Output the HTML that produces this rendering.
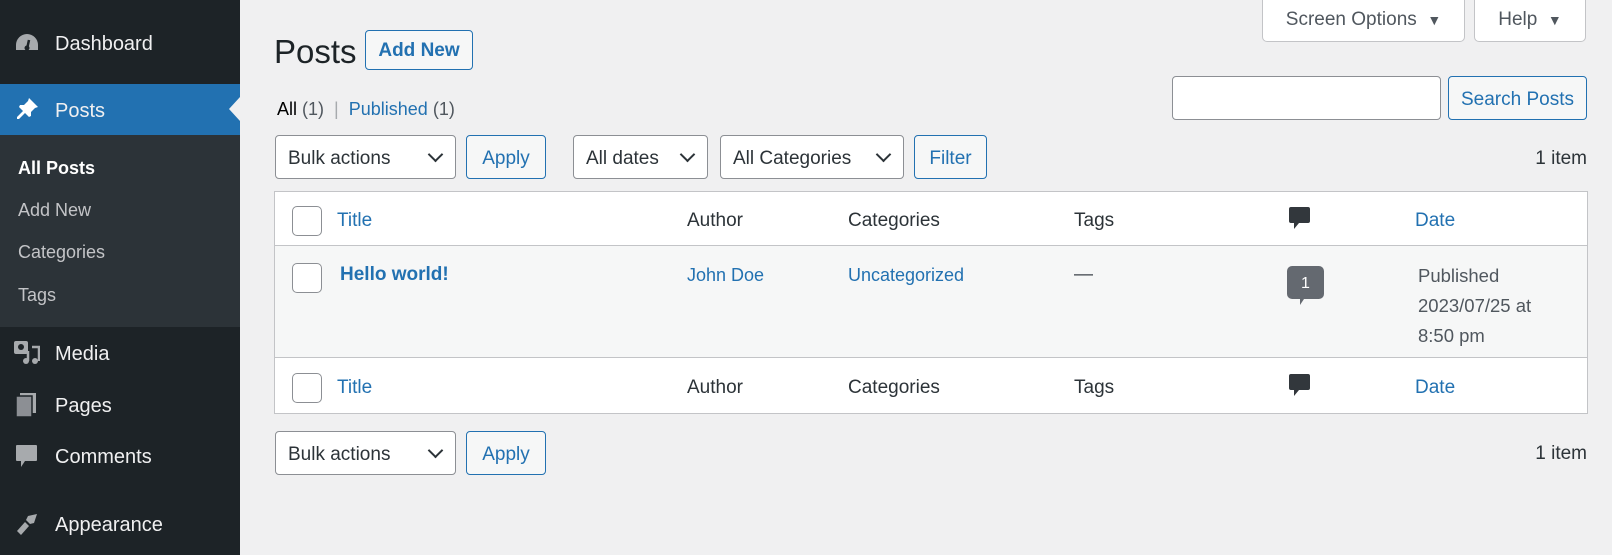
<!DOCTYPE html>
<html><head><meta charset="utf-8"><style>
*{box-sizing:border-box;margin:0;padding:0}
body{width:1612px;height:555px;background:#f0f0f1;font-family:"Liberation Sans",sans-serif;color:#3c434a;position:relative;overflow:hidden;font-size:19px}
.a{position:absolute;white-space:nowrap}
#side{position:absolute;left:0;top:0;width:240px;height:555px;background:#1d2327}
.mi{position:absolute;left:55px;color:#f0f0f1;font-size:20px;line-height:24px}
.ic{position:absolute;left:14px;width:26px;height:24px}
.sub{position:absolute;left:18px;color:#c3c4c7;font-size:18px;line-height:22px}
.btn{position:absolute;border:1px solid #2271b1;color:#2271b1;background:#f6f7f7;border-radius:4px;text-align:center;font-size:19px}
.sel{position:absolute;border:1px solid #8c8f94;background:#fff;border-radius:4px;font-size:19px;color:#2c3338;padding-left:12px}
.chev{position:absolute;right:14px;top:13px;width:11px;height:11px;border-right:2.5px solid #2c3338;border-bottom:2.5px solid #2c3338;transform:rotate(45deg)}
.cb{position:absolute;left:292px;width:30px;height:30px;border:1px solid #8c8f94;border-radius:5px;background:#fff}
.lk{color:#2271b1}
.th{position:absolute;font-size:19px;line-height:24px}
</style></head><body>
<div id="side">
 <div style="position:absolute;top:84px;left:0;width:240px;height:51px;background:#2271b1"></div>
 <div style="position:absolute;top:97px;left:229px;width:0;height:0;border-top:12px solid transparent;border-bottom:12px solid transparent;border-right:11px solid #f0f0f1"></div>
 <div style="position:absolute;top:135px;left:0;width:240px;height:192px;background:#2c3338"></div>
 <svg class="ic" style="top:31px" viewBox="0 0 26 24"><path d="M13 3A11 11 0 0 0 2 14v5h22v-5A11 11 0 0 0 13 3z" fill="#a7aaad"/><path d="M13 18l2-9" stroke="#1d2327" stroke-width="2.5"/><circle cx="13" cy="17" r="2.5" fill="#1d2327"/></svg>
 <div class="mi" style="top:32px">Dashboard</div>
 <svg class="ic" style="top:96px" viewBox="0 0 26 24"><path d="M15 2l9 9-3 1-4 4 0 4-2 1-4-4-6 6-2 0 0-2 6-6-4-4 1-2 4 0 4-4z" fill="#fff"/></svg>
 <div class="mi" style="top:99px">Posts</div>
 <div class="sub" style="top:157px;color:#fff;font-weight:bold">All Posts</div>
 <div class="sub" style="top:199px">Add New</div>
 <div class="sub" style="top:241px">Categories</div>
 <div class="sub" style="top:284px">Tags</div>
 <svg class="ic" style="top:341px" viewBox="0 0 26 24"><rect x="0" y="0" width="14" height="13" rx="2" fill="#a7aaad"/><circle cx="7" cy="6" r="3" fill="#1d2327"/><path d="M18 6h7v14" stroke="#a7aaad" stroke-width="2.5" fill="none"/><circle cx="21" cy="20" r="3" fill="#a7aaad"/><circle cx="12" cy="20" r="3" fill="#a7aaad"/><path d="M14 20V10" stroke="#a7aaad" stroke-width="2.5"/></svg>
 <div class="mi" style="top:342px">Media</div>
 <svg class="ic" style="top:393px" viewBox="0 0 26 24"><rect x="6" y="0" width="16" height="20" fill="#a7aaad"/><rect x="2" y="3" width="16" height="21" fill="#8c8f94" stroke="#1d2327" stroke-width="1.5"/></svg>
 <div class="mi" style="top:394px">Pages</div>
 <svg class="ic" style="top:444px" viewBox="0 0 26 24"><path d="M3 1h19a1 1 0 0 1 1 1v14a1 1 0 0 1-1 1H11l-4 6v-6H3a1 1 0 0 1-1-1V2a1 1 0 0 1 1-1z" fill="#a7aaad"/></svg>
 <div class="mi" style="top:445px">Comments</div>
 <svg class="ic" style="top:512px" viewBox="0 0 26 24"><path d="M14 4l9-2-3 9-4 1-4-4z" fill="#a7aaad"/><path d="M11 10l4 4-8 9-4-4z" fill="#a7aaad"/></svg>
 <div class="mi" style="top:513px">Appearance</div>
</div>

<div class="a" style="left:1262px;top:-1px;width:203px;height:43px;background:#fff;border:1px solid #c3c4c7;border-top:none;border-radius:0 0 5px 5px;text-align:center;line-height:42px;font-size:19px;color:#50575e">Screen Options &nbsp;<span style="font-size:14px">▼</span></div>
<div class="a" style="left:1474px;top:-1px;width:112px;height:43px;background:#fff;border:1px solid #c3c4c7;border-top:none;border-radius:0 0 5px 5px;text-align:center;line-height:42px;font-size:19px;color:#50575e">Help &nbsp;<span style="font-size:14px">▼</span></div>

<div class="a" style="left:274px;top:32px;font-size:33px;color:#1d2327;line-height:40px">Posts</div>
<div class="btn" style="left:365px;top:30px;width:108px;height:40px;line-height:40px;font-weight:bold;background:#f6f7f7">Add New</div>
<div class="a" style="left:277px;top:98px;font-size:18px;line-height:22px"><b style="color:#000;font-weight:normal">All</b> <span style="color:#50575e">(1)</span> <span style="color:#a7aaad">&nbsp;|&nbsp;</span> <span class="lk">Published</span> <span style="color:#50575e">(1)</span></div>

<div class="a" style="left:1172px;top:76px;width:269px;height:44px;background:#fff;border:1px solid #8c8f94;border-radius:4px"></div>
<div class="btn" style="left:1448px;top:76px;width:139px;height:44px;line-height:45px">Search Posts</div>

<div class="sel" style="left:275px;top:135px;width:181px;height:44px;line-height:46px">Bulk actions<div class="chev"></div></div>
<div class="btn" style="left:466px;top:135px;width:80px;height:44px;line-height:46px">Apply</div>
<div class="sel" style="left:573px;top:135px;width:135px;height:44px;line-height:46px">All dates<div class="chev"></div></div>
<div class="sel" style="left:720px;top:135px;width:184px;height:44px;line-height:46px">All Categories<div class="chev"></div></div>
<div class="btn" style="left:914px;top:135px;width:73px;height:44px;line-height:46px">Filter</div>
<div class="a" style="right:25px;top:148px;font-size:19px;color:#2c3338">1 item</div>

<div class="a" style="left:274px;top:191px;width:1314px;height:223px;background:#fff;border:1px solid #c3c4c7"></div>
<div class="a" style="left:275px;top:245px;width:1312px;height:113px;background:#f6f7f7;border-top:1px solid #c3c4c7;border-bottom:1px solid #c3c4c7"></div>

<div class="cb" style="top:206px"></div>
<div class="th lk" style="left:337px;top:209px">Title</div>
<div class="th" style="left:687px;top:209px;color:#2c3338">Author</div>
<div class="th" style="left:848px;top:209px;color:#2c3338">Categories</div>
<div class="th" style="left:1074px;top:209px;color:#2c3338">Tags</div>
<svg class="a" style="left:1289px;top:207px" width="21" height="24" viewBox="0 0 21 24"><path d="M2 0h17a2 2 0 0 1 2 2v12a2 2 0 0 1-2 2H10l-5 6v-6H2a2 2 0 0 1-2-2V2a2 2 0 0 1 2-2z" fill="#32373c"/></svg>
<div class="th lk" style="left:1415px;top:209px">Date</div>

<div class="cb" style="top:263px"></div>
<div class="th lk" style="left:340px;top:263px;font-weight:bold">Hello world!</div>
<div class="th lk" style="left:687px;top:263px;font-size:18px">John Doe</div>
<div class="th lk" style="left:848px;top:263px;font-size:18px">Uncategorized</div>
<div class="th" style="left:1074px;top:263px">—</div>
<svg class="a" style="left:1287px;top:266px" width="37" height="40" viewBox="0 0 37 40"><path d="M5 0h27a5 5 0 0 1 5 5v23a5 5 0 0 1-5 5H17l-4 6v-6H5a5 5 0 0 1-5-5V5a5 5 0 0 1 5-5z" fill="#646970"/><text x="18.5" y="22" text-anchor="middle" fill="#fff" font-size="16" font-family="Liberation Sans">1</text></svg>
<div class="th" style="left:1418px;top:261px;font-size:18.5px;line-height:30px;white-space:normal;color:#50575e">Published<br>2023/07/25 at<br>8:50 pm</div>

<div class="cb" style="top:373px"></div>
<div class="th lk" style="left:337px;top:376px">Title</div>
<div class="th" style="left:687px;top:376px;color:#2c3338">Author</div>
<div class="th" style="left:848px;top:376px;color:#2c3338">Categories</div>
<div class="th" style="left:1074px;top:376px;color:#2c3338">Tags</div>
<svg class="a" style="left:1289px;top:374px" width="21" height="24" viewBox="0 0 21 24"><path d="M2 0h17a2 2 0 0 1 2 2v12a2 2 0 0 1-2 2H10l-5 6v-6H2a2 2 0 0 1-2-2V2a2 2 0 0 1 2-2z" fill="#32373c"/></svg>
<div class="th lk" style="left:1415px;top:376px">Date</div>

<div class="sel" style="left:275px;top:431px;width:181px;height:44px;line-height:46px">Bulk actions<div class="chev"></div></div>
<div class="btn" style="left:466px;top:431px;width:80px;height:44px;line-height:46px">Apply</div>
<div class="a" style="right:25px;top:443px;font-size:19px;color:#2c3338">1 item</div>
</body></html>
